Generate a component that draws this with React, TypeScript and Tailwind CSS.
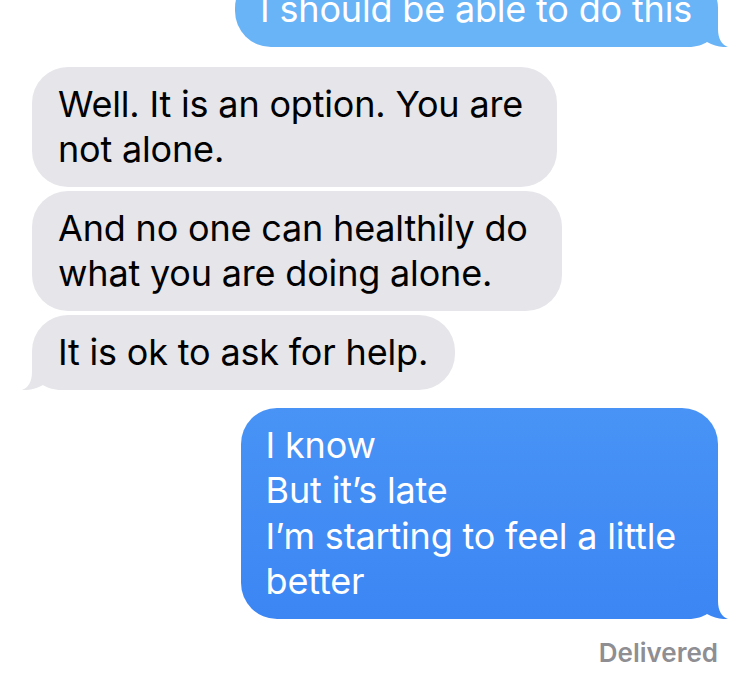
import React from "react";

function TailRight({ color, top }: { color: string; top?: string }) {
  const id = "g" + color.replace("#", "");
  return (
    <svg
      className="absolute right-[-10px] bottom-0"
      width="50"
      height="40"
      viewBox="0 0 50 40"
    >
      <defs>
        <linearGradient id={id} x1="0" y1="0" x2="0" y2="1">
          <stop offset="0" stopColor={top ?? color} />
          <stop offset="1" stopColor={color} />
        </linearGradient>
      </defs>
      <path
        d="M0,0 L40,0 L40,22 C40,32 44,38 50,40 C44,40.5 36,39 29,35 C25,37.5 19,40 10,40 L0,40 Z"
        fill={`url(#${id})`}
      />
    </svg>
  );
}

function TailLeft({ color }: { color: string }) {
  return (
    <svg
      className="absolute left-[-10px] bottom-0"
      width="50"
      height="40"
      viewBox="0 0 50 40"
    >
      <path
        d="M50,0 L10,0 L10,22 C10,32 6,38 0,40 C6,40.5 14,39 21,35 C25,37.5 31,40 40,40 L50,40 Z"
        fill={color}
      />
    </svg>
  );
}

export default function App() {
  return (
    <div
      className="w-[750px] h-[675px] overflow-hidden bg-white flex flex-col px-[32px] text-[36px] leading-[45px] tracking-[-0.005em]"
      style={{ fontFamily: "Inter, 'Noto Sans', sans-serif" }}
    >
      <div className="self-end relative mt-[-28px] rounded-[36px] bg-[#69b3f7] text-white pl-[25px] pr-[26px] py-[15px]">
        <TailRight color="#69b3f7" />
        <span className="relative">I should be able to do this</span>
      </div>

      <div className="self-start mt-[20px] rounded-[36px] bg-[#e5e5ea] text-black pl-[26px] pr-[34px] py-[15px]">
        Well. It is an option. You are
        <br />
        not alone.
      </div>
      <div className="self-start mt-[4px] rounded-[36px] bg-[#e5e5ea] text-black pl-[26px] pr-[34px] py-[15px]">
        And no one can healthily do
        <br />
        what you are doing alone.
      </div>
      <div className="self-start relative mt-[4px] rounded-[36px] bg-[#e5e5ea] text-black pl-[26px] pr-[27px] py-[15px]">
        <TailLeft color="#e5e5ea" />
        <span className="relative">It is ok to ask for help.</span>
      </div>

      <div className="self-end relative mt-[18px] rounded-[36px] bg-gradient-to-b from-[#4893f5] to-[#3c86f4] text-white pl-[25px] pr-[42px] py-[15px] leading-[45.3px]">
        <TailRight color="#3c86f4" top="#3e88f4" />
        <span className="relative block">
          I know
          <br />
          But it’s late
          <br />
          I’m starting to feel a little
          <br />
          better
        </span>
      </div>

      <div className="self-end mt-[19px] text-[26px] leading-[30px] font-semibold text-[#8e8e93] tracking-normal">
        Delivered
      </div>
    </div>
  );
}
